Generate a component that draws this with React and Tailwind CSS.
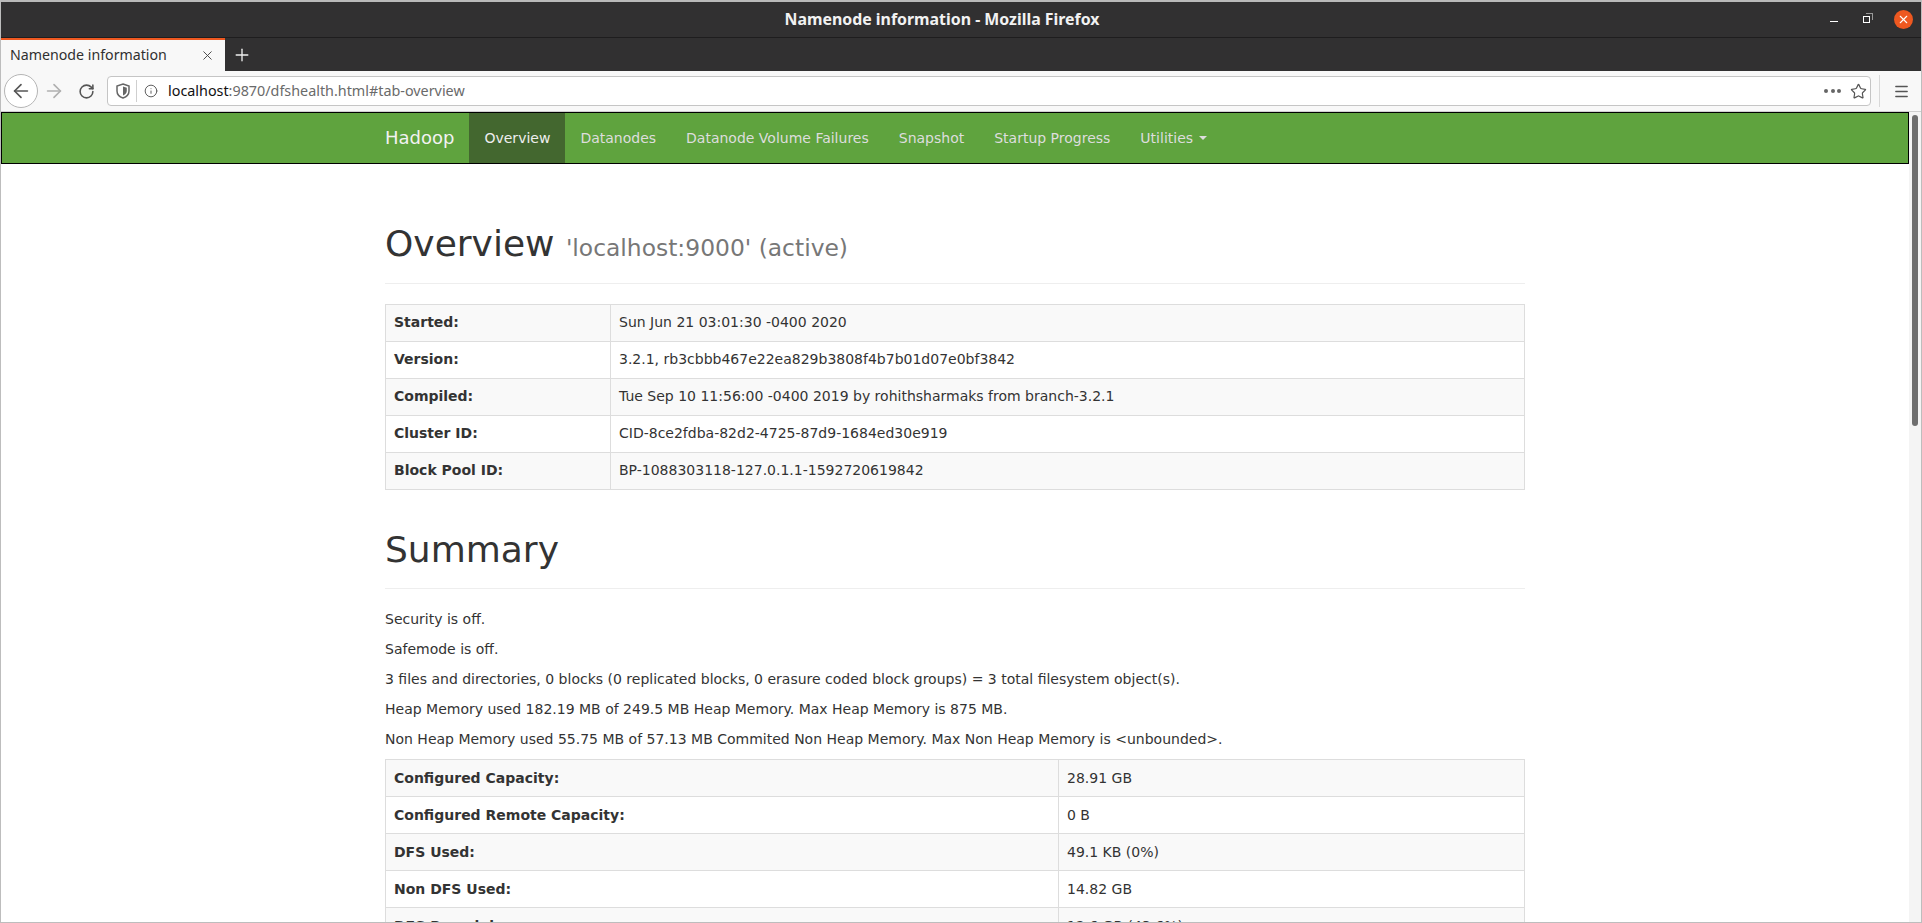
import React from 'react';
import { ArrowLeft, ArrowRight, RotateCw, Plus, X, Info, Star, Menu } from 'lucide-react';

const overviewRows = [
  ['Started:', 'Sun Jun 21 03:01:30 -0400 2020'],
  ['Version:', '3.2.1, rb3cbbb467e22ea829b3808f4b7b01d07e0bf3842'],
  ['Compiled:', 'Tue Sep 10 11:56:00 -0400 2019 by rohithsharmaks from branch-3.2.1'],
  ['Cluster ID:', 'CID-8ce2fdba-82d2-4725-87d9-1684ed30e919'],
  ['Block Pool ID:', 'BP-1088303118-127.0.1.1-1592720619842'],
];

const summaryLines = [
  'Security is off.',
  'Safemode is off.',
  '3 files and directories, 0 blocks (0 replicated blocks, 0 erasure coded block groups) = 3 total filesystem object(s).',
  'Heap Memory used 182.19 MB of 249.5 MB Heap Memory. Max Heap Memory is 875 MB.',
  'Non Heap Memory used 55.75 MB of 57.13 MB Commited Non Heap Memory. Max Non Heap Memory is <unbounded>.',
];

const capacityRows = [
  ['Configured Capacity:', '28.91 GB'],
  ['Configured Remote Capacity:', '0 B'],
  ['DFS Used:', '49.1 KB (0%)'],
  ['Non DFS Used:', '14.82 GB'],
  ['DFS Remaining:', '12.6 GB (43.6%)'],
];

const navItems = ['Datanodes', 'Datanode Volume Failures', 'Snapshot', 'Startup Progress'];

function InfoTable({ rows, labelWidth, cellPad }) {
  return (
    <table className="w-full border-collapse border border-[#ddd] table-fixed">
      <colgroup>
        <col className={labelWidth} />
        <col />
      </colgroup>
      <tbody>
        {rows.map(([label, value], i) => (
          <tr key={label} className={i % 2 === 0 ? 'bg-[#f9f9f9]' : 'bg-white'}>
            <th className={`border border-[#ddd] ${cellPad} text-left font-bold`}>{label}</th>
            <td className={`border border-[#ddd] ${cellPad}`}>{value}</td>
          </tr>
        ))}
      </tbody>
    </table>
  );
}

function BrowserChrome() {
  return (
    <div className="font-['Noto_Sans',sans-serif] shrink-0">
      <div className="relative h-[37px] bg-[#313031] border-t-2 border-[#b9b9b9] flex items-center justify-center">
        <span className="text-[15.9px] font-bold text-[#f2f2f2] mr-[38px]">Namenode information - Mozilla Firefox</span>
        <div className="absolute right-[8px] top-[8px] flex items-center">
          <span className="w-[8px] h-[1px] bg-white mr-[25px] mt-[3px]" />
          <span className="relative w-[7px] h-[7px] border border-white mr-[24px]">
            <span className="absolute left-[2px] top-[-4px] w-[7px] h-[7px] border-t border-r border-[#999]" />
          </span>
          <span className="w-[19px] h-[19px] rounded-full bg-[#ee5820] flex items-center justify-center">
            <X size={13} strokeWidth={2} color="#fff" />
          </span>
        </div>
      </div>
      <div className="h-[34px] bg-[#313031] border-t border-[#1e1d1e] flex items-end">
        <div className="w-[224px] h-[33px] bg-[#f8f8f8] border-t-2 border-[#ee5820] flex items-center pl-[9px] pr-[10px] justify-between">
          <span className="text-[14.2px] whitespace-nowrap text-[#303030] mb-[2px]">Namenode information</span>
          <X size={15} strokeWidth={1.5} color="#444" />
        </div>
        <div className="w-[34px] h-[33px] flex items-center justify-center">
          <Plus size={20} strokeWidth={1.6} color="#eee" />
        </div>
      </div>
      <div className="h-[41px] bg-[#f8f8f8] border-b border-[#cfcfcf] flex items-center pl-[3px]">
        <span className="w-[34px] h-[34px] rounded-full border border-[#b5b5b5] bg-white flex items-center justify-center">
          <ArrowLeft size={22} strokeWidth={1.8} color="#555" />
        </span>
        <span className="w-[32px] flex justify-center">
          <ArrowRight size={22} strokeWidth={1.8} color="#b0b0b0" />
        </span>
        <span className="w-[32px] flex justify-center">
          <RotateCw size={17} strokeWidth={2.2} color="#555" />
        </span>
        <div className="ml-[5px] w-[1764px] shrink-0 h-[30px] bg-white border border-[#c5c5c5] rounded-[4px] flex items-center pl-[8px] pr-[3px]">
          <svg width="14" height="16" viewBox="0 0 14 16">
            <path d="M7 1 L13 3 V8 C13 11.5 10 14 7 15 C4 14 1 11.5 1 8 V3 Z" fill="none" stroke="#666" strokeWidth="1.5" />
            <path d="M7 3.5 L10.8 4.7 V8 C10.8 10 9 11.8 7 12.6 Z" fill="#666" />
          </svg>
          <span className="w-[1px] h-[22px] bg-[#cfcfcf] ml-[6px]" />
          <Info size={14} strokeWidth={1.6} color="#555" className="ml-[7px]" />
          <span className="ml-[10px] text-[14.35px] text-[#6a6a6a]">
            <span className="text-[#111]">localhost</span>:9870/dfshealth.html#tab-overview
          </span>
          <div className="ml-auto flex items-center">
            <span className="flex gap-[2.5px] mr-[9px]">
              <i className="w-[4px] h-[4px] rounded-full bg-[#666]" />
              <i className="w-[4px] h-[4px] rounded-full bg-[#666]" />
              <i className="w-[4px] h-[4px] rounded-full bg-[#666]" />
            </span>
            <Star size={17} strokeWidth={1.7} color="#555" />
          </div>
        </div>
        <span className="w-[1px] h-[32px] bg-[#d8d8d8] ml-[8px]" />
        <span className="w-[40px] pl-[2px] flex justify-center">
          <Menu size={17} strokeWidth={2} color="#555" />
        </span>
      </div>
    </div>
  );
}

export default function App() {
  return (
    <div className="w-[1922px] h-[923px] overflow-hidden flex flex-col bg-white border-x border-b border-[#bdbdbd]">
      <BrowserChrome />
      <div className="flex flex-1 min-h-0 font-['DejaVu_Sans',sans-serif] text-[14px] leading-[20px] text-[#333]">
        <div className="flex-1 min-w-0 overflow-hidden">
          <nav className="h-[52px] bg-[#5fa33e] border border-black">
            <div className="w-[1170px] mx-auto flex h-[50px] items-stretch">
              <a className="px-[15px] text-[18px] text-[#f2f2f2] flex items-center">Hadoop</a>
              <a className="px-[15px] bg-[#43672f] text-[#eee] flex items-center">Overview</a>
              {navItems.map((item) => (
                <a key={item} className="px-[15px] text-[#ddd] flex items-center">{item}</a>
              ))}
              <a className="px-[15px] text-[#ddd] flex items-center">
                Utilities
                <span className="ml-[6px] w-0 h-0 border-x-4 border-x-transparent border-t-4 border-t-[#ddd]" />
              </a>
            </div>
          </nav>
          <main className="w-[1170px] mx-auto px-[15px] pt-[20px]">
            <div className="mt-[40px] mb-[20px] pb-[9px] border-b border-[#eee]">
              <h1 className="mb-[10px] text-[36px] leading-[39.6px] font-normal">
                Overview <small className="text-[23.4px] leading-none text-[#777]">'localhost:9000' (active)</small>
              </h1>
            </div>
            <InfoTable rows={overviewRows} labelWidth="w-[225px]" cellPad="px-2 pt-[7px] pb-[9px]" />
            <div className="mt-[40px] mb-[20px] pb-[9px] border-b border-[#eee]">
              <h1 className="mb-[10px] text-[36px] leading-[39.6px] font-normal">Summary</h1>
            </div>
            {summaryLines.map((line) => (
              <p key={line} className="mb-[10px]">{line}</p>
            ))}
            <InfoTable rows={capacityRows} labelWidth="w-[673px]" cellPad="p-2" />
          </main>
        </div>
        <div className="w-[12px] shrink-0 pt-[3px] pl-[3px] bg-[#f4f4f4]">
          <div className="w-[6px] h-[311px] rounded-full bg-[#6e6e6e]" />
        </div>
      </div>
    </div>
  );
}
